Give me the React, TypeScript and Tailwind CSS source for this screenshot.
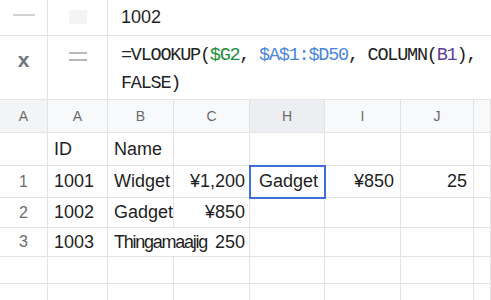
import React from "react";

const line = "border-[#e3e3e3]";

export default function App() {
  const sans = { fontFamily: '"Liberation Sans", Arial, sans-serif' };
  const cell = `border-r border-b ${line} flex items-center`;
  return (
    <div className="w-[491px] h-[300px] overflow-hidden bg-white text-[#1f1f1f]" style={sans}>
      {/* top bar */}
      <div className={`grid grid-cols-[48px_60px_1fr] h-[36px] border-b ${line}`}>
        <div className={`border-r ${line} flex items-center justify-center`}>
          <div className="w-[22px] h-[2px] bg-[#d2d2d2] -mt-[6px]" />
        </div>
        <div className={`border-r ${line} flex items-center justify-center`}>
          <div className="w-[18px] h-[14px] bg-[#f4f4f4] -mt-[2px]" />
        </div>
        <div className="flex items-center pl-[13px] text-[18px] -mt-[1px]">1002</div>
      </div>
      {/* formula row */}
      <div className={`grid grid-cols-[48px_60px_1fr] h-[64px] border-b ${line}`}>
        <div className={`border-r ${line} flex justify-center pt-[12px]`}>
          <span className="text-[21px] font-bold text-[#6f7780] leading-[24px]">x</span>
        </div>
        <div className={`border-r ${line} flex justify-center pt-[16px]`}>
          <svg width="18" height="10" viewBox="0 0 18 10">
            <rect x="0" y="0" width="18" height="2" fill="#b8b8b8" />
            <rect x="0" y="7" width="18" height="2" fill="#b8b8b8" />
          </svg>
        </div>
        <div
          className="pl-[13px] pt-[6px] text-[18.5px] leading-[28px] tracking-[-1.24px] text-[#222] whitespace-nowrap"
          style={{ fontFamily: '"Liberation Mono", "DejaVu Sans Mono", monospace' }}
        >
          <div>
            =VLOOKUP(<span className="text-[#1e8e3e]">$G2</span>,{" "}
            <span className="text-[#4a86d8]">$A$1:$D50</span>, COLUMN(
            <span className="text-[#5b3c99]">B1</span>),
          </div>
          <div>FALSE)</div>
        </div>
      </div>
      {/* grid */}
      <div className="grid grid-cols-[48px_60px_66px_76px_75px_76px_73px_1fr]">
        {/* column headers */}
        {["A", "A", "B", "C", "H", "I", "J", ""].map((h, i) => (
          <div
            key={i}
            className={`h-[33px] ${cell} justify-center text-[14px] text-[#6b6b6b] ${
              i === 4 ? "bg-[#eceef1]" : i === 0 ? "bg-[#f3f4f5]" : "bg-[#f8f9fa]"
            }`}
          >
            {h}
          </div>
        ))}
        {/* header row */}
        <div className={`h-[33px] ${cell}`} />
        <div className={`h-[33px] ${cell} pl-[6px] text-[18px]`}>ID</div>
        <div className={`h-[33px] ${cell} pl-[6px] text-[18px]`}>Name</div>
        <div className={`h-[33px] ${cell}`} />
        <div className={`h-[33px] ${cell}`} />
        <div className={`h-[33px] ${cell}`} />
        <div className={`h-[33px] ${cell}`} />
        <div className={`h-[33px] ${cell}`} />
        {/* row 1 */}
        <div className={`h-[32px] ${cell} justify-center text-[16px] text-[#6b6b6b]`}>1</div>
        <div className={`h-[32px] ${cell} pl-[6px] text-[18px]`}>1001</div>
        <div className={`h-[32px] ${cell} pl-[6px] text-[18px]`}>Widget</div>
        <div className={`h-[32px] ${cell} justify-end pr-[4px] text-[18px]`}>¥1,200</div>
        <div className={`h-[32px] ${cell} relative pl-[9px] text-[18px]`}>
          <div className="absolute -left-[1px] -top-[1px] w-[77px] h-[34px] border-2 border-[#3d6fd6]" />
          Gadget
        </div>
        <div className={`h-[32px] ${cell} justify-end pr-[6px] text-[18px]`}>¥850</div>
        <div className={`h-[32px] ${cell} justify-end pr-[6px] text-[18px]`}>25</div>
        <div className={`h-[32px] ${cell}`} />
        {/* row 2 */}
        <div className={`h-[30px] ${cell} justify-center text-[16px] text-[#6b6b6b]`}>2</div>
        <div className={`h-[30px] ${cell} pl-[6px] text-[18px]`}>1002</div>
        <div className={`h-[30px] ${cell} pl-[6px] text-[18px]`}>Gadget</div>
        <div className={`h-[30px] ${cell} justify-end pr-[4px] text-[18px]`}>¥850</div>
        <div className={`h-[30px] ${cell}`} />
        <div className={`h-[30px] ${cell}`} />
        <div className={`h-[30px] ${cell}`} />
        <div className={`h-[30px] ${cell}`} />
        {/* row 3 */}
        <div className={`h-[29px] ${cell} justify-center text-[16px] text-[#6b6b6b]`}>3</div>
        <div className={`h-[29px] ${cell} pl-[6px] text-[18px]`}>1003</div>
        <div className={`h-[29px] border-b ${line} flex items-center pl-[6px] text-[18px] whitespace-nowrap tracking-[-1.25px]`}>
          Thingamaajig
        </div>
        <div className={`h-[29px] ${cell} justify-end pr-[4px] text-[18px]`}>250</div>
        <div className={`h-[29px] ${cell}`} />
        <div className={`h-[29px] ${cell}`} />
        <div className={`h-[29px] ${cell}`} />
        <div className={`h-[29px] ${cell}`} />
        {/* blank rows */}
        {Array.from({ length: 8 }).map((_, i) => (
          <div key={"a" + i} className={`h-[27px] ${cell}`} />
        ))}
        {Array.from({ length: 8 }).map((_, i) => (
          <div key={"b" + i} className={`h-[27px] ${cell}`} />
        ))}
      </div>
    </div>
  );
}
